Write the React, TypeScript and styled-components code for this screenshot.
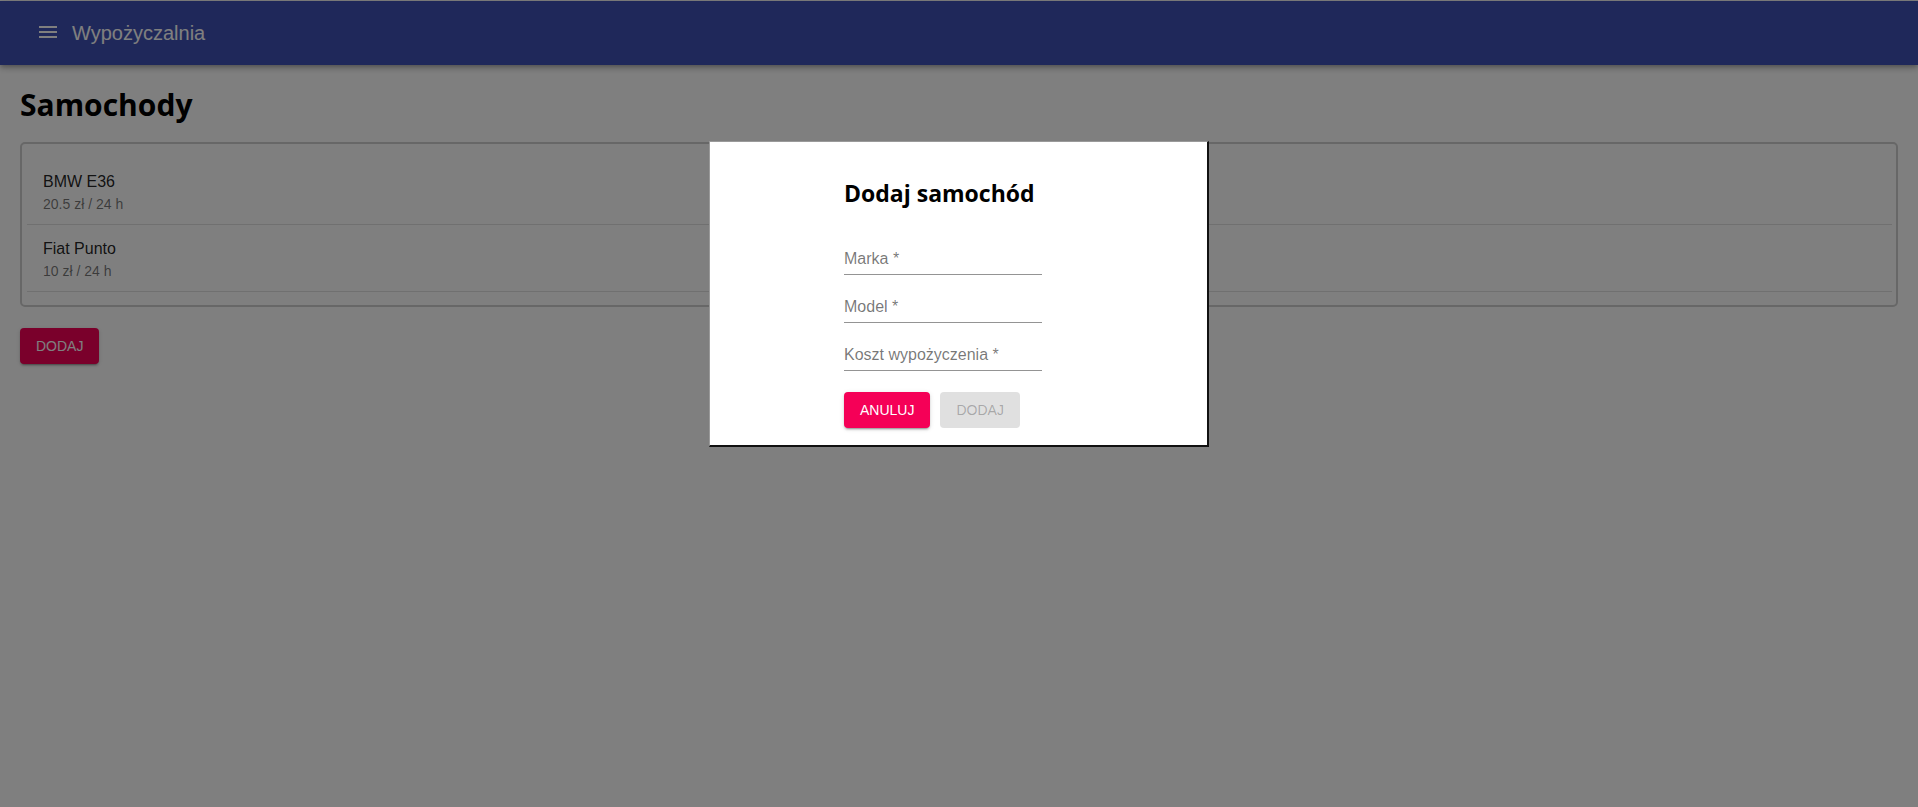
import React from 'react'
import styled, { createGlobalStyle } from 'styled-components'

const GlobalStyle = createGlobalStyle`
  html, body {
    margin: 0;
    padding: 0;
    background: #fff;
    font-family: "Liberation Sans", Arial, sans-serif;
  }
`

type Car = {
  name: string
  price: string
}

const cars: Car[] = [
  { name: 'BMW E36', price: '20.5 zł / 24 h' },
  { name: 'Fiat Punto', price: '10 zł / 24 h' },
]

const fields = ['Marka *', 'Model *', 'Koszt wypożyczenia *']

const Page = styled.div`
  min-height: 807px;
  padding-top: 1px;
`

const AppBar = styled.header`
  height: 64px;
  display: flex;
  align-items: center;
  padding: 0 24px;
  background: #3f51b5;
  color: #fff;
  box-shadow: 0 2px 4px -1px rgba(0, 0, 0, 0.2), 0 4px 5px 0 rgba(0, 0, 0, 0.14),
    0 1px 10px 0 rgba(0, 0, 0, 0.12);
`

const MenuButton = styled.button`
  width: 48px;
  height: 48px;
  padding: 12px;
  margin-top: -2px;
  border: 0;
  background: none;
  color: inherit;
  display: flex;
  align-items: center;
  justify-content: center;
`

const AppTitle = styled.span`
  font-size: 20px;
  font-weight: 400;
`

const Main = styled.main`
  padding: 0 20px;
`

const Heading = styled.h1`
  margin: 20px 0 17px;
  font-family: "Open Sans", sans-serif;
  font-weight: 700;
  font-size: 30px;
  line-height: 40px;
  color: #000;
`

const ListCard = styled.ul`
  list-style: none;
  margin: 0;
  padding: 14px 4px 13px 5px;
  border: 2px solid #cecece;
  border-radius: 5px;
`

const Item = styled.li`
  padding: 12px 16px 10px;
  border-bottom: 1px solid #e0e0e0;
`

const Primary = styled.div`
  font-size: 16px;
  line-height: 24px;
  color: rgba(0, 0, 0, 0.87);
`

const Secondary = styled.div`
  font-size: 14px;
  line-height: 20px;
  color: rgba(0, 0, 0, 0.54);
`

const Button = styled.button<{ $disabled?: boolean }>`
  height: 36px;
  padding: 0 16px;
  border: 0;
  border-radius: 4px;
  font-family: "Liberation Sans", Arial, sans-serif;
  font-size: 14px;
  font-weight: 400;
  text-transform: uppercase;
  letter-spacing: 0;
  background: ${(p) => (p.$disabled ? '#e0e0e0' : '#f50057')};
  color: ${(p) => (p.$disabled ? 'rgba(0, 0, 0, 0.26)' : '#fff')};
  box-shadow: ${(p) =>
    p.$disabled
      ? 'none'
      : '0 3px 1px -2px rgba(0,0,0,0.2), 0 2px 2px 0 rgba(0,0,0,0.14), 0 1px 5px 0 rgba(0,0,0,0.12)'};
`

const AddButton = styled(Button)`
  margin-top: 21px;
`

const Backdrop = styled.div`
  position: fixed;
  inset: 0;
  background: rgba(0, 0, 0, 0.5);
  display: flex;
  justify-content: center;
  align-items: flex-start;
  padding-top: 141px;
`

const Dialog = styled.div`
  width: 500px;
  box-sizing: border-box;
  background: #fff;
  border-top: 1px solid #9a9a9a;
  border-left: 1px solid #9a9a9a;
  border-right: 2px solid #111;
  border-bottom: 2px solid #111;
  padding: 33px 0 17px 134px;
`

const Form = styled.form`
  width: 198px;
  display: flex;
  flex-direction: column;
`

const DialogTitle = styled.h2`
  margin: 0 0 16px;
  font-family: "Open Sans", sans-serif;
  font-weight: 700;
  font-size: 23px;
  line-height: 36px;
  color: #000;
  white-space: nowrap;
`

const Field = styled.label`
  height: 48px;
  box-sizing: border-box;
  display: flex;
  align-items: flex-end;
  padding-bottom: 6px;
  border-bottom: 1px solid rgba(0, 0, 0, 0.42);
  font-size: 16px;
  line-height: 19px;
  color: rgba(0, 0, 0, 0.54);
  white-space: nowrap;
`

const Actions = styled.div`
  display: flex;
  gap: 10px;
  margin-top: 21px;
`

const MenuIcon = () => (
  <svg width="24" height="24" viewBox="0 0 24 24" fill="currentColor">
    <path d="M3 18h18v-2H3v2zm0-5h18v-2H3v2zm0-7v2h18V6H3z" />
  </svg>
)

const App: React.FC = () => {
  return (
    <Page>
      <GlobalStyle />
      <AppBar>
        <MenuButton aria-label="menu">
          <MenuIcon />
        </MenuButton>
        <AppTitle>Wypożyczalnia</AppTitle>
      </AppBar>
      <Main>
        <Heading>Samochody</Heading>
        <ListCard>
          {cars.map((car) => (
            <Item key={car.name}>
              <Primary>{car.name}</Primary>
              <Secondary>{car.price}</Secondary>
            </Item>
          ))}
        </ListCard>
        <AddButton>Dodaj</AddButton>
      </Main>
      <Backdrop>
        <Dialog>
          <Form>
            <DialogTitle>Dodaj samochód</DialogTitle>
            {fields.map((f) => (
              <Field key={f}>{f}</Field>
            ))}
            <Actions>
              <Button type="button">Anuluj</Button>
              <Button type="button" $disabled>
                Dodaj
              </Button>
            </Actions>
          </Form>
        </Dialog>
      </Backdrop>
    </Page>
  )
}

export default App
